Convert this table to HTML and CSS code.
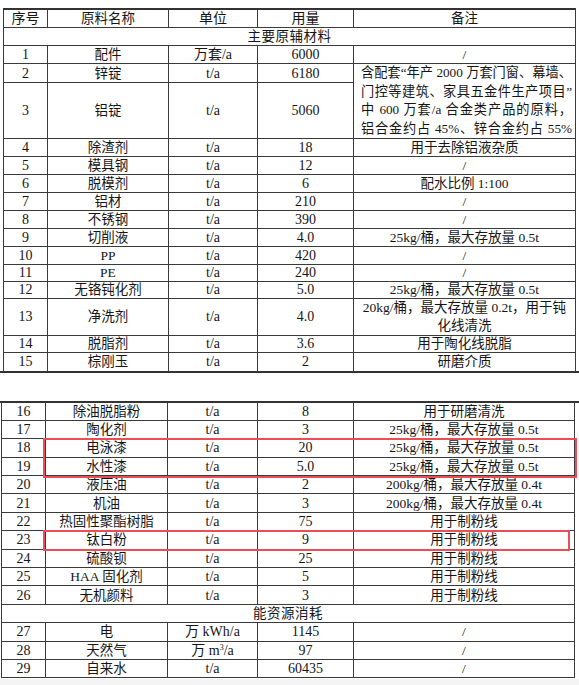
FILE: index.html
```html
<!DOCTYPE html>
<html lang="zh">
<head>
<meta charset="utf-8">
<title>原辅材料</title>
<link rel="stylesheet" href="styles.css">
</head>
<body>
<div class="page">
  <table class="tbl t1">
    <colgroup><col class="c1"><col class="c2"><col class="c3"><col class="c4"><col class="c5"></colgroup>
    <tr><td>序号</td><td>原料名称</td><td>单位</td><td>用量</td><td>备注</td></tr>
    <tr><td colspan="5" class="sec">主要原辅材料</td></tr>
    <tr><td>1</td><td>配件</td><td>万套/a</td><td>6000</td><td>/</td></tr>
    <tr class="r19"><td>2</td><td>锌锭</td><td>t/a</td><td>6180</td>
      <td rowspan="2" class="note">
        <div class="jl">含配套“年产 2000 万套门窗、幕墙、</div>
        <div class="jl">门控等建筑、家具五金件生产项目”</div>
        <div class="jl">中 600 万套/a 合金类产品的原料，</div>
        <div class="jl">铝合金约占 45%、锌合金约占 55%</div>
      </td></tr>
    <tr class="r55"><td>3</td><td>铝锭</td><td>t/a</td><td>5060</td></tr>
    <tr><td>4</td><td>除渣剂</td><td>t/a</td><td>18</td><td>用于去除铝液杂质</td></tr>
    <tr><td>5</td><td>模具钢</td><td>t/a</td><td>12</td><td>/</td></tr>
    <tr><td>6</td><td>脱模剂</td><td>t/a</td><td>6</td><td>配水比例 1:100</td></tr>
    <tr><td>7</td><td>铝材</td><td>t/a</td><td>210</td><td>/</td></tr>
    <tr><td>8</td><td>不锈钢</td><td>t/a</td><td>390</td><td>/</td></tr>
    <tr><td>9</td><td>切削液</td><td>t/a</td><td>4.0</td><td>25kg/桶，最大存放量 0.5t</td></tr>
    <tr><td>10</td><td>PP</td><td>t/a</td><td>420</td><td>/</td></tr>
    <tr class="r16"><td>11</td><td>PE</td><td>t/a</td><td>240</td><td>/</td></tr>
    <tr class="r17"><td>12</td><td>无铬钝化剂</td><td>t/a</td><td>5.0</td><td>25kg/桶，最大存放量 0.5t</td></tr>
    <tr class="r37"><td>13</td><td>净洗剂</td><td>t/a</td><td>4.0</td><td class="two"><div>20kg/桶，最大存放量 0.2t，用于钝</div><div>化线清洗</div></td></tr>
    <tr class="r17"><td>14</td><td>脱脂剂</td><td>t/a</td><td>3.6</td><td>用于陶化线脱脂</td></tr>
    <tr class="r19"><td>15</td><td>棕刚玉</td><td>t/a</td><td>2</td><td>研磨介质</td></tr>
  </table>
  <div class="rule"></div>
  <div class="gap"></div>
  <div class="rule"></div>
  <div class="t2wrap">
    <table class="tbl t2">
      <colgroup><col class="d1"><col class="d2"><col class="d3"><col class="d4"><col class="d5"></colgroup>
      <tr><td>16</td><td>除油脱脂粉</td><td>t/a</td><td>8</td><td>用于研磨清洗</td></tr>
      <tr><td>17</td><td>陶化剂</td><td>t/a</td><td>3</td><td>25kg/桶，最大存放量 0.5t</td></tr>
      <tr><td>18</td><td>电泳漆</td><td>t/a</td><td>20</td><td>25kg/桶，最大存放量 0.5t</td></tr>
      <tr><td>19</td><td>水性漆</td><td>t/a</td><td>5.0</td><td>25kg/桶，最大存放量 0.5t</td></tr>
      <tr><td>20</td><td>液压油</td><td>t/a</td><td>2</td><td>200kg/桶，最大存放量 0.4t</td></tr>
      <tr><td>21</td><td>机油</td><td>t/a</td><td>3</td><td>200kg/桶，最大存放量 0.4t</td></tr>
      <tr><td>22</td><td>热固性聚酯树脂</td><td>t/a</td><td>75</td><td>用于制粉线</td></tr>
      <tr><td>23</td><td>钛白粉</td><td>t/a</td><td>9</td><td>用于制粉线</td></tr>
      <tr><td>24</td><td>硫酸钡</td><td>t/a</td><td>25</td><td>用于制粉线</td></tr>
      <tr><td>25</td><td>HAA 固化剂</td><td>t/a</td><td>5</td><td>用于制粉线</td></tr>
      <tr><td>26</td><td>无机颜料</td><td>t/a</td><td>3</td><td>用于制粉线</td></tr>
      <tr><td colspan="5" class="sec">能资源消耗</td></tr>
      <tr><td>27</td><td>电</td><td>万 kWh/a</td><td>1145</td><td>/</td></tr>
      <tr><td>28</td><td>天然气</td><td>万 m<sup>3</sup>/a</td><td>97</td><td>/</td></tr>
      <tr><td>29</td><td>自来水</td><td>t/a</td><td>60435</td><td>/</td></tr>
    </table>
    <div class="mark m1"></div>
    <div class="mark m2"></div>
  </div>
  <div class="foot"></div>
</div>
</body>
</html>
```
FILE: styles.css
```css
html, body {
  margin: 0;
  padding: 0;
  background: #ffffff;
}
.page {
  width: 579px;
  padding-top: 8px;
  font-family: "Liberation Serif", "Noto Sans CJK SC", serif;
  font-size: 13.5px;
  color: #151515;
}
.tbl {
  border-collapse: collapse;
  table-layout: fixed;
}
.tbl td {
  border: 1px solid #3a3a3a;
  padding: 0 3px;
  height: 17px;
  line-height: 13px;
  text-align: center;
  vertical-align: middle;
  white-space: nowrap;
  overflow: hidden;
}
.tbl td:nth-child(1):not(.sec),
.tbl td:nth-child(3),
.tbl td:nth-child(4) {
  font-size: 14px;
}
.t1 {
  width: 572px;
  margin-left: 3px;
  border-top: 2px solid #333;
}
.t1 tr:last-child td { border-bottom: none; }
.c1 { width: 44px; }
.c2 { width: 121px; }
.c3 { width: 89px; }
.c4 { width: 96px; }
.c5 { width: 222px; }
.t1 .r19 td { height: 18px; }
.t1 .r55 td { height: 54px; }
.t1 .r16 td { height: 15.5px; }
.t1 .r17 td { height: 16px; }
.t1 .r37 td { height: 36px; }
.tbl td.sec {
  text-align: center;
  letter-spacing: 0.5px;
}
.tbl td.note {
  text-align: left;
  padding: 0 3px 0 7px;
  font-size: 13.2px;
  overflow: visible;
}
.jl {
  height: 18.5px;
  line-height: 18.5px;
  text-align: justify;
  text-align-last: justify;
  white-space: nowrap;
}
.tbl td.two {
  white-space: nowrap;
}
.two div {
  height: 17.5px;
  line-height: 17.5px;
}
.rule {
  width: 579px;
  height: 0;
  border-top: 2px solid #333;
}
.gap {
  height: 28px;
}
.t2wrap {
  position: relative;
  width: 579px;
}
.t2 {
  width: 573px;
  margin-left: 1px;
}
.t2 tr:first-child td { border-top: none; }
.t2 td { height: 17.4px; }
.d1 { width: 44px; }
.d2 { width: 122px; }
.d3 { width: 90px; }
.d4 { width: 96px; }
.d5 { width: 221px; }
sup {
  font-size: 8px;
  line-height: 0;
  vertical-align: 5px;
}
.mark {
  position: absolute;
  border: 2px solid #ec4e58;
  box-sizing: border-box;
}
.m1 {
  left: 43px;
  top: 35px;
  width: 534px;
  height: 40px;
}
.m2 {
  left: 43px;
  top: 127px;
  width: 527px;
  height: 21px;
}
.foot {
  margin-top: 1px;
  height: 8px;
  background: #f4f4f4;
}
```
